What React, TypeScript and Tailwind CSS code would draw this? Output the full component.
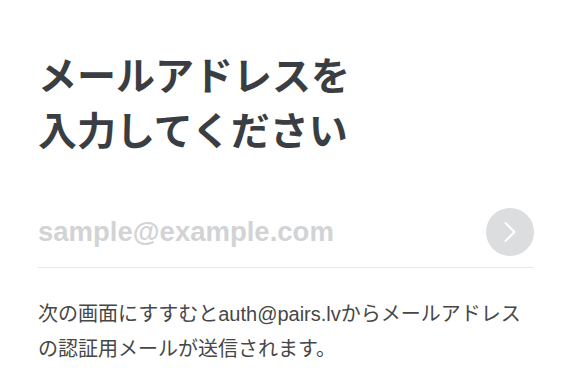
export default function App() {
  return (
    <div className="w-[570px] h-[373px] bg-white overflow-hidden pl-[38px] pr-[36px] pt-[46px] font-['Noto_Sans_CJK_JP',sans-serif]">
      <h1 className="text-[39px] leading-[55px] font-semibold text-[#3a3e42]">
        メールアドレスを
        <br />
        入力してください
      </h1>

      <div className="mt-[52px] flex items-center justify-between pb-[11px] border-b border-[#e9e9e9]">
        <div className="text-[27.5px] font-bold text-[#d2d3d5] font-['Liberation_Sans',sans-serif]">
          sample@example.com
        </div>
        <button className="w-[48px] h-[48px] rounded-full bg-[#dcdddf] flex items-center justify-center">
          <svg width="14" height="22" viewBox="0 0 14 22" fill="none">
            <path d="M2.5 2 L11.5 11 L2.5 20" stroke="white" strokeWidth="2" strokeLinecap="round" strokeLinejoin="round" />
          </svg>
        </button>
      </div>

      <p className="mt-[28px] text-[20px] leading-[34px] text-[#474747]">
        次の画面にすすむと<span className="font-['Liberation_Sans',sans-serif]">auth@pairs.lv</span>からメールアドレスの認証用メールが送信されます。
      </p>
    </div>
  );
}
